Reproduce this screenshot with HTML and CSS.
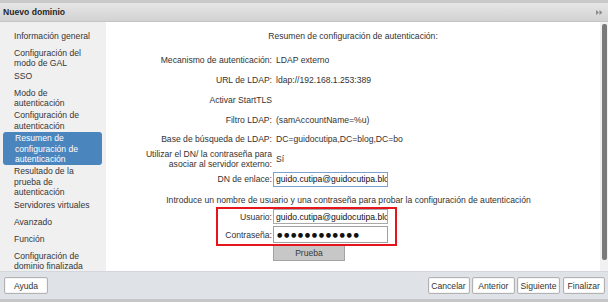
FILE: index.html
```html
<!DOCTYPE html>
<html lang="es">
<head>
<meta charset="utf-8">
<title>Nuevo dominio</title>
<link rel="stylesheet" href="styles.css">
</head>
<body>
<div class="top-strip"></div>
<div class="titlebar">
  <span class="title">Nuevo dominio</span>
  <svg class="expand" width="7" height="5" viewBox="0 0 7 5"><path d="M0 0 L3 2.5 L0 5 Z M3.5 0 L6.5 2.5 L3.5 5 Z" fill="#8a8a8a"/></svg>
</div>
<div class="main">
  <nav class="sidebar">
    <div class="item single">Información general</div>
    <div class="item">Configuración del<br>modo de GAL</div>
    <div class="item single">SSO</div>
    <div class="item">Modo de<br>autenticación</div>
    <div class="item">Configuración de<br>autenticación</div>
    <div class="item selected">Resumen de<br>configuración de<br>autenticación</div>
    <div class="item">Resultado de la<br>prueba de<br>autenticación</div>
    <div class="item single">Servidores virtuales</div>
    <div class="item single">Avanzado</div>
    <div class="item single">Función</div>
    <div class="item">Configuración de<br>dominio finalizada</div>
  </nav>
  <section class="content">
    <div class="heading">Resumen de configuración de autenticación:</div>
    <div class="row">
      <div class="lbl">Mecanismo de autenticación:</div>
      <div class="val">LDAP externo</div>
    </div>
    <div class="row">
      <div class="lbl">URL de LDAP:</div>
      <div class="val">ldap://192.168.1.253:389</div>
    </div>
    <div class="row">
      <div class="lbl">Activar StartTLS</div>
      <div class="val"></div>
    </div>
    <div class="row">
      <div class="lbl">Filtro LDAP:</div>
      <div class="val">(samAccountName=%u)</div>
    </div>
    <div class="row row-short">
      <div class="lbl">Base de búsqueda de LDAP:</div>
      <div class="val">DC=guidocutipa,DC=blog,DC=bo</div>
    </div>
    <div class="row row-double">
      <div class="lbl lbl-multi">Utilizar el DN/ la contraseña para<br>asociar al servidor externo:</div>
      <div class="val">Sí</div>
    </div>
    <div class="row row-short">
      <label class="lbl" for="dn">DN de enlace:</label>
      <input class="field field-focus" id="dn" type="text" readonly value="guido.cutipa@guidocutipa.blog.bo">
    </div>
    <div class="intro">Introduce un nombre de usuario y una contraseña para probar la configuración de autenticación</div>
    <div class="test-group">
      <div class="row row-user">
        <label class="lbl" for="user">Usuario:</label>
        <input class="field" id="user" type="text" readonly value="guido.cutipa@guidocutipa.blog.bo">
      </div>
      <div class="row row-pass">
        <div class="lbl">Contraseña:</div>
        <div class="field field-pass"><span class="dots">●●●●●●●●●●●●</span></div>
      </div>
    </div>
    <button class="test-btn" type="button">Prueba</button>
  </section>
  <div class="scrollbar"><div class="thumb"></div></div>
</div>
<div class="footer">
  <button class="btn" type="button">Ayuda</button>
  <div class="spacer"></div>
  <button class="btn btn-cancel" type="button">Cancelar</button>
  <button class="btn btn-prev" type="button">Anterior</button>
  <button class="btn btn-next" type="button">Siguiente</button>
  <button class="btn btn-finish" type="button">Finalizar</button>
</div>
<div class="bottom-strip"></div>
</body>
</html>
```
FILE: styles.css
```css
* { box-sizing: border-box; }
html, body {
  margin: 0;
  padding: 0;
  width: 608px;
  height: 302px;
  overflow: hidden;
  background: #ffffff;
  font-family: "Liberation Sans", Arial, sans-serif;
  font-size: 8.6px;
  color: #333333;
}

.top-strip {
  height: 3px;
  background: #c9c9c9;
}

.titlebar {
  height: 19px;
  display: flex;
  align-items: center;
  justify-content: space-between;
  padding: 0 5px 0 3px;
  background: linear-gradient(#e6e6e6, #d2d2d2);
  border-bottom: 1px solid #c4c4c4;
}
.title {
  font-weight: bold;
  color: #262626;
}
.expand { display: block; }

.main {
  display: flex;
  height: 249px;
}

.sidebar {
  width: 106px;
  flex: none;
  background: #f0f0f0;
  padding-top: 8.8px;
  overflow: hidden;
}
.item {
  line-height: 10.4px;
  margin: 0 4px 2px 3px;
  padding-left: 11px;
  color: #363636;
  white-space: nowrap;
}
.item.single { padding-bottom: 4.6px; }
.item.selected {
  background: #4a85bd;
  color: #ffffff;
  border-radius: 3px;
  padding: 1px 0 1px 12px;
  margin-top: -1px;
  margin-bottom: 1px;
}

.content {
  flex: 1;
  background: #ffffff;
  padding-top: 8.5px;
}
.heading {
  text-align: center;
  line-height: 11px;
  margin-bottom: 8.5px;
}
.row {
  display: flex;
  align-items: center;
  height: 20px;
}
.row-short { height: 18px; }
.row-double { height: 22px; }
.row-user { height: 17px; }
.row-pass { height: 19px; }
.lbl {
  width: 166px;
  flex: none;
  text-align: right;
  white-space: nowrap;
}
.lbl-multi { line-height: 10px; }
.val {
  margin-left: 1px;
  padding-left: 3px;
  white-space: nowrap;
}
.field {
  display: block;
  margin: 0 0 0 1px;
  width: 115px;
  height: 15px;
  border: 1px solid #a9a9a9;
  border-radius: 0;
  background: #ffffff;
  padding: 0 0 0 2px;
  overflow: hidden;
  white-space: nowrap;
  color: #111111;
  font-family: "Liberation Sans", Arial, sans-serif;
  font-size: 8.6px;
  line-height: 13px;
  outline: none;
}
.field-focus { border-color: #7fa1cf; }
.field-pass {
  height: 17px;
  line-height: 15px;
  border-color: #a0a0a0;
}
.dots {
  font-family: "DejaVu Sans", sans-serif;
  font-size: 6.2px;
  letter-spacing: 1.55px;
  color: #111111;
  padding-left: 1px;
}
.intro {
  text-align: center;
  line-height: 11px;
  margin-top: 7px;
  padding-right: 9px;
}
.test-group {
  position: relative;
  margin-top: 2px;
}
.test-group::after {
  content: "";
  position: absolute;
  left: 110px;
  top: -1px;
  width: 177px;
  bottom: -2px;
  border: 2px solid #e8141c;
  pointer-events: none;
}
.test-btn {
  display: block;
  margin: 1px 0 0 167px;
  width: 72px;
  height: 16px;
  padding: 0;
  background: #c7c7c7;
  border: 1px solid #a3a3a3;
  border-top-color: #b9b9b9;
  font-family: "Liberation Sans", Arial, sans-serif;
  font-size: 8.6px;
  color: #3a3a3a;
}

.scrollbar {
  width: 8px;
  flex: none;
  background: #f1f1f1;
  padding: 2px 0 0 2px;
}
.thumb {
  width: 4.5px;
  height: 236px;
  background: #7a7a7a;
  border-radius: 2px;
}

.footer {
  height: 28px;
  display: flex;
  align-items: center;
  gap: 2.5px;
  padding: 0 3px 0 4px;
  background: #dfe2e7;
  border-top: 1px solid #d3d6db;
}
.spacer { flex: 1; }
.btn {
  height: 16.5px;
  padding: 0;
  background: #ffffff;
  border: 1px solid #b2b2b2;
  border-radius: 2px;
  box-shadow: inset 0 0 0 1px #f4f4f4;
  font-family: "Liberation Sans", Arial, sans-serif;
  font-size: 8.6px;
  color: #333333;
  width: 44px;
}
.btn-cancel { width: 42px; }
.btn-prev { width: 42.5px; }
.btn-next { width: 43px; }
.btn-finish { width: 42.5px; }

.bottom-strip {
  height: 3px;
  background: #c6c6c6;
}
```
